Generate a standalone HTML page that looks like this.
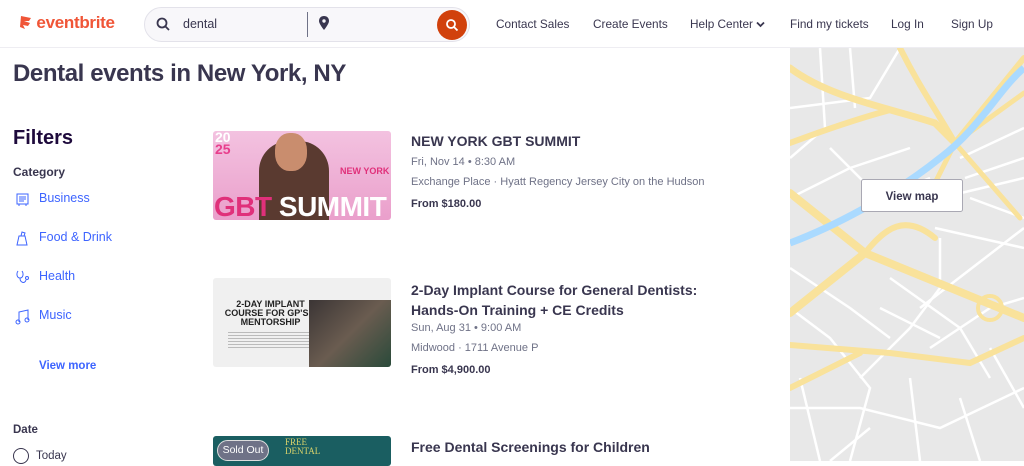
<!DOCTYPE html>
<html><head><meta charset="utf-8"><style>
*{margin:0;padding:0;box-sizing:border-box}
body{width:1024px;height:461px;overflow:hidden;background:#fff;font-family:"Liberation Sans",sans-serif;color:#39364f;position:relative}
.abs{position:absolute}
.nav{font-size:11.8px;color:#39364f;top:17px}
.cat{left:13px;font-size:12.5px;color:#3d64ff;}
.cat span{position:absolute;left:26px;top:0;white-space:nowrap}
.t{font-size:14px;font-weight:bold;color:#39364f;left:411px;white-space:nowrap}
.s{font-size:11px;color:#6f7287;left:411px;white-space:nowrap}
.p{font-size:11px;font-weight:bold;color:#39364f;left:411px}
</style></head><body>
<div class="abs" style="left:0;top:47px;width:1024px;height:1px;background:#eeedf2"></div>
<div class="abs" style="left:19px;top:13px;font-size:17px;font-weight:bold;color:#f05537;letter-spacing:-0.3px">
<svg width="13" height="15" viewBox="0 0 13 15" style="vertical-align:-2px"><path d="M2 1 L12 3 L10 6 L5 6 L11 8 L9 11 L4 10 L6 14 L1 12 Z" fill="#f05537"/></svg> eventbrite</div>
<div class="abs" style="left:144px;top:7px;width:326px;height:35px;border:1px solid #e3e2ea;border-radius:18px;background:#f8f7fa"></div>
<svg class="abs" style="left:156px;top:17px" width="14" height="14" viewBox="0 0 14 14"><circle cx="6" cy="6" r="4.5" fill="none" stroke="#39364f" stroke-width="1.8"/><path d="M9.5 9.5 L13 13" stroke="#39364f" stroke-width="1.8"/></svg>
<div class="abs" style="left:183px;top:17px;font-size:12.5px;color:#39364f">dental</div>
<div class="abs" style="left:307px;top:12px;width:1px;height:25px;background:#6f7287"></div>
<svg class="abs" style="left:319px;top:16px" width="10" height="14" viewBox="0 0 10 14"><path d="M5 0 C2 0 0 2 0 5 C0 8 5 14 5 14 C5 14 10 8 10 5 C10 2 8 0 5 0Z" fill="#39364f"/><circle cx="5" cy="5" r="1.7" fill="#f8f7fa"/></svg>
<div class="abs" style="left:437px;top:10px;width:30px;height:30px;border-radius:50%;background:#d1410c"></div>
<svg class="abs" style="left:445px;top:18px" width="14" height="14" viewBox="0 0 14 14"><circle cx="6" cy="6" r="4" fill="none" stroke="#fff" stroke-width="1.8"/><path d="M9 9 L12.5 12.5" stroke="#fff" stroke-width="1.8"/></svg>
<div class="abs nav" style="left:496px">Contact Sales</div>
<div class="abs nav" style="left:593px">Create Events</div>
<div class="abs nav" style="left:690px">Help Center <svg width="9" height="7" viewBox="0 0 9 7"><path d="M1 1.5 L4.5 5 L8 1.5" fill="none" stroke="#39364f" stroke-width="1.8"/></svg></div>
<div class="abs nav" style="left:790px">Find my tickets</div>
<div class="abs nav" style="left:891px">Log In</div>
<div class="abs nav" style="left:951px">Sign Up</div>

<div class="abs" style="left:13px;top:60px;font-size:24px;font-weight:bold;color:#39364f;letter-spacing:-0.4px">Dental events in New York, NY</div>
<div class="abs" style="left:13px;top:127px;font-size:20px;font-weight:bold;color:#1e0a3c">Filters</div>
<div class="abs" style="left:13px;top:165px;font-size:12px;font-weight:bold;color:#39364f">Category</div>
<div class="abs cat" style="top:191px">
<svg width="15" height="15" viewBox="0 0 15 15" style="position:absolute;left:2px;top:1px"><rect x="2" y="2" width="11" height="10" fill="none" stroke="#3d64ff"/><path d="M4 5h7M4 7h7M4 9h5M4 12v2M11 12v2" stroke="#3d64ff"/></svg><span>Business</span></div>
<div class="abs cat" style="top:230px"><svg width="15" height="15" viewBox="0 0 15 15" style="position:absolute;left:2px;top:1px"><path d="M2 14 L4 5 L10 5 L12 14Z M6 5 L7 1 L10 2 L9 5" fill="none" stroke="#3d64ff"/></svg><span>Food &amp; Drink</span></div>
<div class="abs cat" style="top:269px"><svg width="15" height="15" viewBox="0 0 15 15" style="position:absolute;left:2px;top:1px"><path d="M3 1 C1 4 2 8 5 8 C8 8 9 4 7 1 M5 8 C5 13 10 14 11 10" fill="none" stroke="#3d64ff"/><circle cx="12" cy="8" r="1.5" fill="none" stroke="#3d64ff"/></svg><span>Health</span></div>
<div class="abs cat" style="top:308px"><svg width="15" height="16" viewBox="0 0 15 16" style="position:absolute;left:2px;top:1px"><path d="M4 13 V3 L13 1 V11" fill="none" stroke="#3d64ff"/><circle cx="3" cy="13" r="2" fill="none" stroke="#3d64ff"/><circle cx="12" cy="11" r="2" fill="none" stroke="#3d64ff"/></svg><span>Music</span></div>
<div class="abs" style="left:39px;top:360px;font-size:11.5px;font-weight:bold;color:#3d64ff">View more</div>
<div class="abs" style="left:13px;top:424px;font-size:11.5px;font-weight:bold;color:#39364f">Date</div>
<div class="abs" style="left:13px;top:448px;width:16px;height:16px;border:1.5px solid #39364f;border-radius:50%"></div>
<div class="abs" style="left:36px;top:450px;font-size:11.5px;color:#39364f">Today</div>

<div class="abs" style="left:213px;top:131px;width:178px;height:89px;border-radius:3px;overflow:hidden;background:linear-gradient(180deg,#f3c2e0,#ea9fcb)">
<div class="abs" style="left:46px;top:10px;width:70px;height:79px;background:#5a3a30;border-radius:30px 30px 0 0"></div>
<div class="abs" style="left:62px;top:2px;width:32px;height:38px;background:#c98d6e;border-radius:45%"></div>
<div class="abs" style="left:2px;top:0;font-size:14px;font-weight:bold;color:#fff;line-height:12px">20<br><span style="color:#e83e8c">25</span></div>
<div class="abs" style="left:127px;top:35px;font-size:9px;font-weight:bold;color:#e0307a">NEW YORK</div>
<div class="abs" style="left:1px;top:62px;font-size:28px;font-weight:bold;color:#fff;line-height:28px;letter-spacing:-0.5px"><span style="color:#e0307a">GBT</span> SUMMIT</div>
</div>
<div class="abs" style="left:213px;top:278px;width:178px;height:89px;border-radius:3px;overflow:hidden;background:#f0f0f0">
<div class="abs" style="left:10px;top:22px;width:95px;font-size:9px;font-weight:bold;color:#222;text-align:center;line-height:9px">2-DAY IMPLANT COURSE FOR GP'S + MENTORSHIP</div>
<div class="abs" style="left:15px;top:54px;width:85px;height:16px;background:repeating-linear-gradient(180deg,#bbb 0 1px,transparent 1px 3px)"></div>
<div class="abs" style="left:96px;top:22px;width:82px;height:67px;background:linear-gradient(135deg,#3b3535,#6a5c50 50%,#2a4a3a)"></div>
</div>
<div class="abs" style="left:213px;top:436px;width:178px;height:30px;border-radius:3px;background:#1a5e61"></div>
<div class="abs" style="left:217px;top:440px;width:52px;height:21px;border-radius:11px;background:#6f7287;border:1.5px solid #ddd;color:#fff;font-size:10.5px;text-align:center;line-height:18px">Sold Out</div>
<div class="abs" style="left:285px;top:438px;font-size:9px;color:#d9d26a;line-height:9px;font-family:'Liberation Serif',serif">FREE<br>DENTAL</div>

<div class="abs t" style="top:133px">NEW YORK GBT SUMMIT</div>
<div class="abs s" style="top:156px">Fri, Nov 14 • 8:30 AM</div>
<div class="abs s" style="top:176px">Exchange Place · Hyatt Regency Jersey City on the Hudson</div>
<div class="abs p" style="top:198px">From $180.00</div>
<div class="abs t" style="top:280px;line-height:20px">2-Day Implant Course for General Dentists:<br>Hands-On Training + CE Credits</div>
<div class="abs s" style="top:322px">Sun, Aug 31 • 9:00 AM</div>
<div class="abs s" style="top:342px">Midwood · 1711 Avenue P</div>
<div class="abs p" style="top:364px">From $4,900.00</div>
<div class="abs t" style="top:439px">Free Dental Screenings for Children</div>

<svg class="abs" style="left:790px;top:48px" width="234" height="413" viewBox="0 0 234 413">
<rect width="234" height="413" fill="#e8e8e8"/>
<g fill="none" stroke="#fff" stroke-width="2.5">
<path d="M0 60 L80 50 L110 0"/><path d="M30 0 L35 80 L0 110"/><path d="M60 0 L65 60"/><path d="M0 150 L60 120 L120 100"/><path d="M40 100 L90 150 L140 130"/>
<path d="M170 110 L234 80"/><path d="M175 130 L234 110"/><path d="M150 150 L234 130"/><path d="M180 150 L234 170"/>
<path d="M145 180 L234 200"/><path d="M150 190 L150 240 L120 280 L70 330"/><path d="M130 260 L234 180"/><path d="M100 230 L170 280 L200 330"/>
<path d="M0 220 L60 260 L100 290"/><path d="M0 260 L40 290 L80 340 L60 413"/><path d="M120 330 L130 413"/><path d="M140 300 L200 260 L234 250"/>
<path d="M0 360 L70 360 L150 380 L234 340"/><path d="M80 380 L40 413"/><path d="M170 350 L190 413"/><path d="M200 300 L234 360"/><path d="M10 330 L30 413"/><path d="M90 260 L150 290"/>
</g>
<g fill="none" stroke="#f9e29b" stroke-linecap="round">
<path d="M0 20 C40 50 100 60 145 75 L165 95" stroke-width="7"/>
<path d="M110 0 C130 40 145 60 165 95" stroke-width="6"/>
<path d="M165 95 L234 10" stroke-width="6"/><path d="M165 95 L234 45" stroke-width="5"/>
<path d="M0 95 C40 80 70 70 100 62" stroke-width="6"/>
<path d="M165 95 L145 135" stroke-width="5"/><path d="M165 95 L230 170" stroke-width="5"/>
<path d="M0 145 L75 205 L234 270" stroke-width="8"/><path d="M75 205 L0 265" stroke-width="8"/>
<path d="M75 205 C95 180 115 165 145 190" stroke-width="6"/>
<path d="M0 297 L100 305 L180 315 L234 290" stroke-width="6"/><path d="M0 340 L70 305" stroke-width="6"/>
<circle cx="200" cy="260" r="12" stroke-width="4"/>
</g>
<path d="M0 195 C40 180 100 150 150 110 C190 80 210 40 234 20" fill="none" stroke="#aadaff" stroke-width="7"/>
<rect x="71.5" y="131.5" width="101" height="32" rx="2" fill="#fff" stroke="#a9a8b3"/>
<text x="122" y="152" text-anchor="middle" font-family="Liberation Sans,sans-serif" font-size="11.5" font-weight="bold" fill="#39364f">View map</text>
</svg>
</body></html>
